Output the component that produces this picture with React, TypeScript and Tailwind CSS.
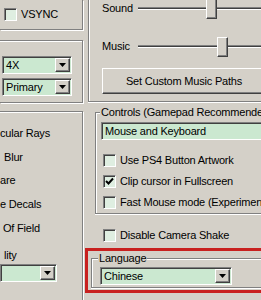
import React from "react";

const sunken =
  "border border-t-[#808080] border-l-[#808080] border-b-white border-r-white shadow-[inset_1px_1px_0_#404040]";
const raised =
  "border border-t-white border-l-white border-b-[#404040] border-r-[#404040] shadow-[inset_-1px_-1px_0_#808080]";

function Arrow() {
  return (
    <div className={`mr-[1px] flex h-[14px] w-[15px] shrink-0 items-center justify-center bg-[#d4d0c8] ${raised}`}>
      <svg width="7" height="4" viewBox="0 0 7 4">
        <polygon points="0,0 7,0 3.5,4" fill="#000" />
      </svg>
    </div>
  );
}

function Combo({ label, className, arrow = true }: { label: string; className: string; arrow?: boolean }) {
  return (
    <div className={`flex h-[18px] shrink-0 items-center bg-[#cbe8d0] ${sunken} ${className}`}>
      <span className="flex-1 whitespace-nowrap pl-[3px]">{label}</span>
      {arrow && <Arrow />}
    </div>
  );
}

function Check({ label, checked = false, className = "" }: { label: string; checked?: boolean; className?: string }) {
  return (
    <div className={`flex items-center gap-[4px] whitespace-nowrap ${className}`}>
      <div className={`flex h-[13px] w-[13px] shrink-0 items-center justify-center bg-[#dfeee1] ${sunken}`}>
        {checked && (
          <svg width="9" height="9" viewBox="0 0 9 9">
            <path d="M1 4 L3.5 6.5 L8 1.5" stroke="#000" strokeWidth="2" fill="none" />
          </svg>
        )}
      </div>
      <span>{label}</span>
    </div>
  );
}

function Slider({ label, thumb }: { label: string; thumb: number }) {
  return (
    <div className="flex h-[16px] items-center pl-[13px]">
      <span className="w-[36px] shrink-0">{label}</span>
      <div className="relative h-[3px] flex-1 border-t border-b border-t-[#808080] border-b-white bg-[#404040]">
        {/* thumb sits on the channel */}
        <div
          className={`absolute top-[-9px] h-[20px] w-[11px] bg-[#d4d0c8] ${raised}`}
          style={{ left: thumb }}
        />
      </div>
    </div>
  );
}

export default function App() {
  return (
    <div className="flex h-[300px] w-[261px] overflow-hidden bg-[#d4d0c8] font-['Liberation_Sans',Arial,sans-serif] text-[11px] leading-[13px] tracking-[-0.2px] text-black">
      {/* left column */}
      <div className="flex w-[84px] shrink-0 flex-col">
        <div className="h-[30px] w-[83px] border-r border-b border-[#808080] pt-[8px] pl-[4px] shadow-[1px_1px_0_#fff]">
          <Check label="VSYNC" />
        </div>

        <div className="mt-[10px] flex h-[63px] w-[83px] flex-col gap-[4px] border-t border-r border-b border-[#808080] pt-[15px] pl-[2px] shadow-[1px_1px_0_#fff,inset_0_1px_0_#fff]">
          <Combo label="4X" className="w-[70px]" />
          <Combo label="Primary" className="w-[70px]" />
        </div>

        <div className="mt-[8px] flex w-[83px] flex-1 flex-col border-t border-r border-[#808080] pt-[9px] shadow-[1px_1px_0_#fff,inset_0_1px_0_#fff]">
          <div className="flex h-[24px] items-center whitespace-nowrap">cular Rays</div>
          <div className="flex h-[24px] items-center pl-[4px]">Blur</div>
          <div className="flex h-[23px] items-center">are</div>
          <div className="flex h-[24px] items-center whitespace-nowrap">e Decals</div>
          <div className="flex h-[24px] items-center whitespace-nowrap pl-[3px]">Of Field</div>
          <div className="mt-[9px] pl-[4px]">lity</div>
          <Combo label="" className="mt-[2px] w-[57px]" />
        </div>
      </div>

      {/* right column */}
      <div className="flex w-[190px] shrink-0 flex-col">
        <div className="ml-[4px] h-[102px] border-l border-b border-[#808080] shadow-[inset_1px_0_0_#fff,0_1px_0_#fff]">
          <Slider label="Sound" thumb={68} />
          <div className="mt-[22px]">
            <Slider label="Music" thumb={79} />
          </div>
          <button
            className={`mt-[14px] ml-[13px] flex h-[26px] w-[164px] items-center justify-center bg-[#d4d0c8] ${raised}`}
          >
            Set Custom Music Paths
          </button>
        </div>

        <fieldset className="mt-[4px] ml-[11px] border border-r-0 border-[#808080] shadow-[inset_1px_1px_0_#fff,0_1px_0_#fff]">
          <legend className="ml-[4px] bg-[#d4d0c8] px-[1px] whitespace-nowrap">Controls (Gamepad Recommended)</legend>
          <Combo label="Mouse and Keyboard" arrow={false} className="mt-[3px] ml-[5px] w-[180px]" />
          <div className="mt-[10px] flex flex-col pl-[7px]">
            <Check label="Use PS4 Button Artwork" className="h-[21px]" />
            <Check label="Clip cursor in Fullscreen" checked className="h-[21px]" />
            <Check label="Fast Mouse mode (Experimental)" className="h-[21px]" />
          </div>
        </fieldset>

        <Check label="Disable Camera Shake" className="mt-[15px] ml-[19px] h-[13px]" />

        <div className="mt-[6px] ml-[1px] h-[45px] w-[200px] border-[3px] border-[#c8201f]">
          <fieldset className="mt-[1px] ml-[3px] border border-r-0 border-[#808080] pb-[2px] shadow-[inset_1px_1px_0_#fff,0_1px_0_#fff]">
            <legend className="ml-[6px] bg-[#d4d0c8] px-[1px]">Language</legend>
            <Combo label="Chinese" className="mt-[2px] ml-[8px] w-[132px]" />
          </fieldset>
        </div>
      </div>
    </div>
  );
}
